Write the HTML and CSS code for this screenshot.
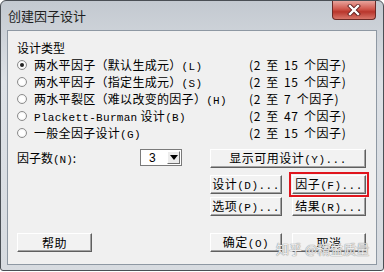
FILE: index.html
```html
<!DOCTYPE html>
<html>
<head>
  <meta charset="UTF-8">
  <title>创建因子设计</title>
  <link rel="stylesheet" href="styles.css">
</head>
<body>
  <div class="window">
    <div class="titlebar">
      <span class="title">创建因子设计</span>
      <div class="close">
        <svg width="14" height="12" viewBox="0 0 14 12">
          <path d="M3 2 L11 10 M11 2 L3 10" stroke="#5a1a1a" stroke-width="4" stroke-linecap="square"/>
          <path d="M3 2 L11 10 M11 2 L3 10" stroke="#fff" stroke-width="2.4" stroke-linecap="square"/>
        </svg>
      </div>
    </div>

    <div class="client">
      <div class="group-title">设计类型</div>

      <!-- design types -->
      <div class="types">
        <div class="type-row">
          <span class="radio checked"></span>
          <span class="label">两水平因子（默认生成元）<span class="lat">(L)</span></span>
          <span class="range">(2 至 15 个因子)</span>
        </div>
        <div class="type-row">
          <span class="radio"></span>
          <span class="label">两水平因子（指定生成元）<span class="lat">(S)</span></span>
          <span class="range">(2 至 15 个因子)</span>
        </div>
        <div class="type-row">
          <span class="radio"></span>
          <span class="label">两水平裂区（难以改变的因子）<span class="lat">(H)</span></span>
          <span class="range">(2 至 7 个因子)</span>
        </div>
        <div class="type-row">
          <span class="radio"></span>
          <span class="label"><span class="lat">Plackett-Burman</span> 设计<span class="lat">(B)</span></span>
          <span class="range">(2 至 47 个因子)</span>
        </div>
        <div class="type-row">
          <span class="radio"></span>
          <span class="label">一般全因子设计<span class="lat">(G)</span></span>
          <span class="range">(2 至 15 个因子)</span>
        </div>
      </div>

      <div class="lower">
        <div class="factor-count">
          <span class="factor-label">因子数<span class="lat">(N)</span>:</span>
          <div class="combo">
            <span class="combo-value">3</span>
            <span class="combo-btn">
              <svg width="8" height="5" viewBox="0 0 8 5"><path d="M0 0 H8 L4 5 Z" fill="#000"/></svg>
            </span>
          </div>
        </div>

        <div class="actions">
          <button class="btn wide">显示可用设计<span class="lat">(Y)...</span></button>
          <button class="btn">设计<span class="lat">(D)...</span></button>
          <button class="btn marked">因子<span class="lat">(F)...</span></button>
          <button class="btn">选项<span class="lat">(P)...</span></button>
          <button class="btn">结果<span class="lat">(R)...</span></button>
        </div>
      </div>

      <div class="footer">
        <button class="btn help">帮助</button>
        <div class="footer-right">
          <button class="btn">确定<span class="lat">(O)</span></button>
          <button class="btn">取消</button>
        </div>
      </div>

      <div class="watermark">知乎 @精益质量</div>
    </div>
  </div>
</body>
</html>
```

FILE: styles.css
```css
body {
  margin: 0;
  width: 384px;
  height: 272px;
  background: #fff;
  font-family: "Noto Sans CJK SC", "Liberation Sans", sans-serif;
  font-size: 12px;
  color: #000;
  overflow: hidden;
}

.window {
  position: relative;
  box-sizing: border-box;
  width: 384px;
  height: 271px;
  border: 1px solid #4a4f55;
  border-radius: 6px 6px 3px 3px;
  background: linear-gradient(to bottom, #c3c9d0 0%, #dde1e6 30%, #d7dbe0 100%);
  padding: 0 6px 5px;
}

.titlebar {
  height: 29px;
  display: flex;
  align-items: flex-start;
}

.title {
  margin: 5px 0 0 1px;
  font-size: 13px;
  color: #1f1f1f;
}

.close {
  margin-left: auto;
  margin-right: 1px;
  width: 44px;
  height: 19px;
  box-sizing: border-box;
  border: 1px solid #6b2a26;
  border-top: none;
  border-radius: 0 0 4px 4px;
  background: linear-gradient(to bottom, #e8a49c 0%, #d0574c 45%, #b8362c 60%, #d8766a 100%);
  display: flex;
  align-items: center;
  justify-content: center;
}

.client {
  position: relative;
  box-sizing: border-box;
  height: 235px;
  border: 1px solid #8e98a3;
  background: #f0f0f0;
  padding: 9px 9px 0 9px;
}

.lat {
  font-family: "Liberation Mono", monospace;
  font-size: 11px;
}

.group-title {
  line-height: 16px;
}

.types {
  display: flex;
  flex-direction: column;
}

.type-row {
  display: flex;
  align-items: center;
  height: 17px;
}

.radio {
  width: 10px;
  height: 10px;
  border-radius: 50%;
  border: 1px solid #8c8c8c;
  background: radial-gradient(circle, #fff 40%, #e6e6e6 100%);
  margin: 0 7px 0 0;
  position: relative;
  box-sizing: border-box;
  flex: none;
}

.radio.checked::after {
  content: "";
  position: absolute;
  left: 2px;
  top: 2px;
  width: 4px;
  height: 4px;
  border-radius: 50%;
  background: #222;
}

.label {
  width: 215px;
  letter-spacing: 0.3px;
  white-space: nowrap;
}

.range {
  word-spacing: 2px;
  letter-spacing: 0.6px;
  white-space: nowrap;
}

.lower {
  display: flex;
  justify-content: space-between;
  margin-top: 8px;
}

.factor-count {
  display: flex;
  align-items: flex-start;
  line-height: 18px;
}

.factor-label {
  width: 123px;
}

.combo {
  width: 42px;
  height: 17px;
  box-sizing: border-box;
  border: 1px solid #7a7a7a;
  background: #fff;
  display: flex;
  align-items: center;
  justify-content: space-between;
  padding: 0 1px 0 8px;
}

.combo-value {
  font-family: "Liberation Sans", sans-serif;
  font-size: 12px;
}

.combo-btn {
  width: 13px;
  height: 13px;
  box-sizing: border-box;
  border: 1px solid;
  border-color: #fff #6d6d6d #6d6d6d #fff;
  background: #ececec;
  display: flex;
  align-items: center;
  justify-content: center;
}

.actions {
  width: 156px;
  display: grid;
  grid-template-columns: 72px 74px;
  column-gap: 10px;
  row-gap: 3px;
  margin-right: 1px;
}

.btn {
  height: 19px;
  box-sizing: border-box;
  padding: 0;
  border: 1px solid;
  border-color: #fff #5f5f5f #5f5f5f #fff;
  box-shadow: inset -1px -1px 0 #a3a3a3;
  background: #f2f2f2;
  font-family: "Noto Sans CJK SC", sans-serif;
  font-size: 12px;
  line-height: 16px;
  color: #000;
  letter-spacing: 0.5px;
}

.btn.wide {
  grid-column: 1 / 3;
  margin-bottom: 4px;
}

.btn.marked {
  outline: 2px solid #e0151d;
  outline-offset: 1px;
}

.footer {
  display: flex;
  justify-content: space-between;
  margin-top: 17px;
}

.help {
  width: 75px;
}

.footer-right {
  width: 156px;
  display: grid;
  grid-template-columns: 72px 74px;
  column-gap: 10px;
  margin-right: 1px;
}

.watermark {
  position: absolute;
  left: 268px;
  top: 208px;
  font-size: 13px;
  color: rgba(255, 255, 255, 0.85);
  text-shadow: 0 0 1px #888, 0 0 1px #888;
}
```
